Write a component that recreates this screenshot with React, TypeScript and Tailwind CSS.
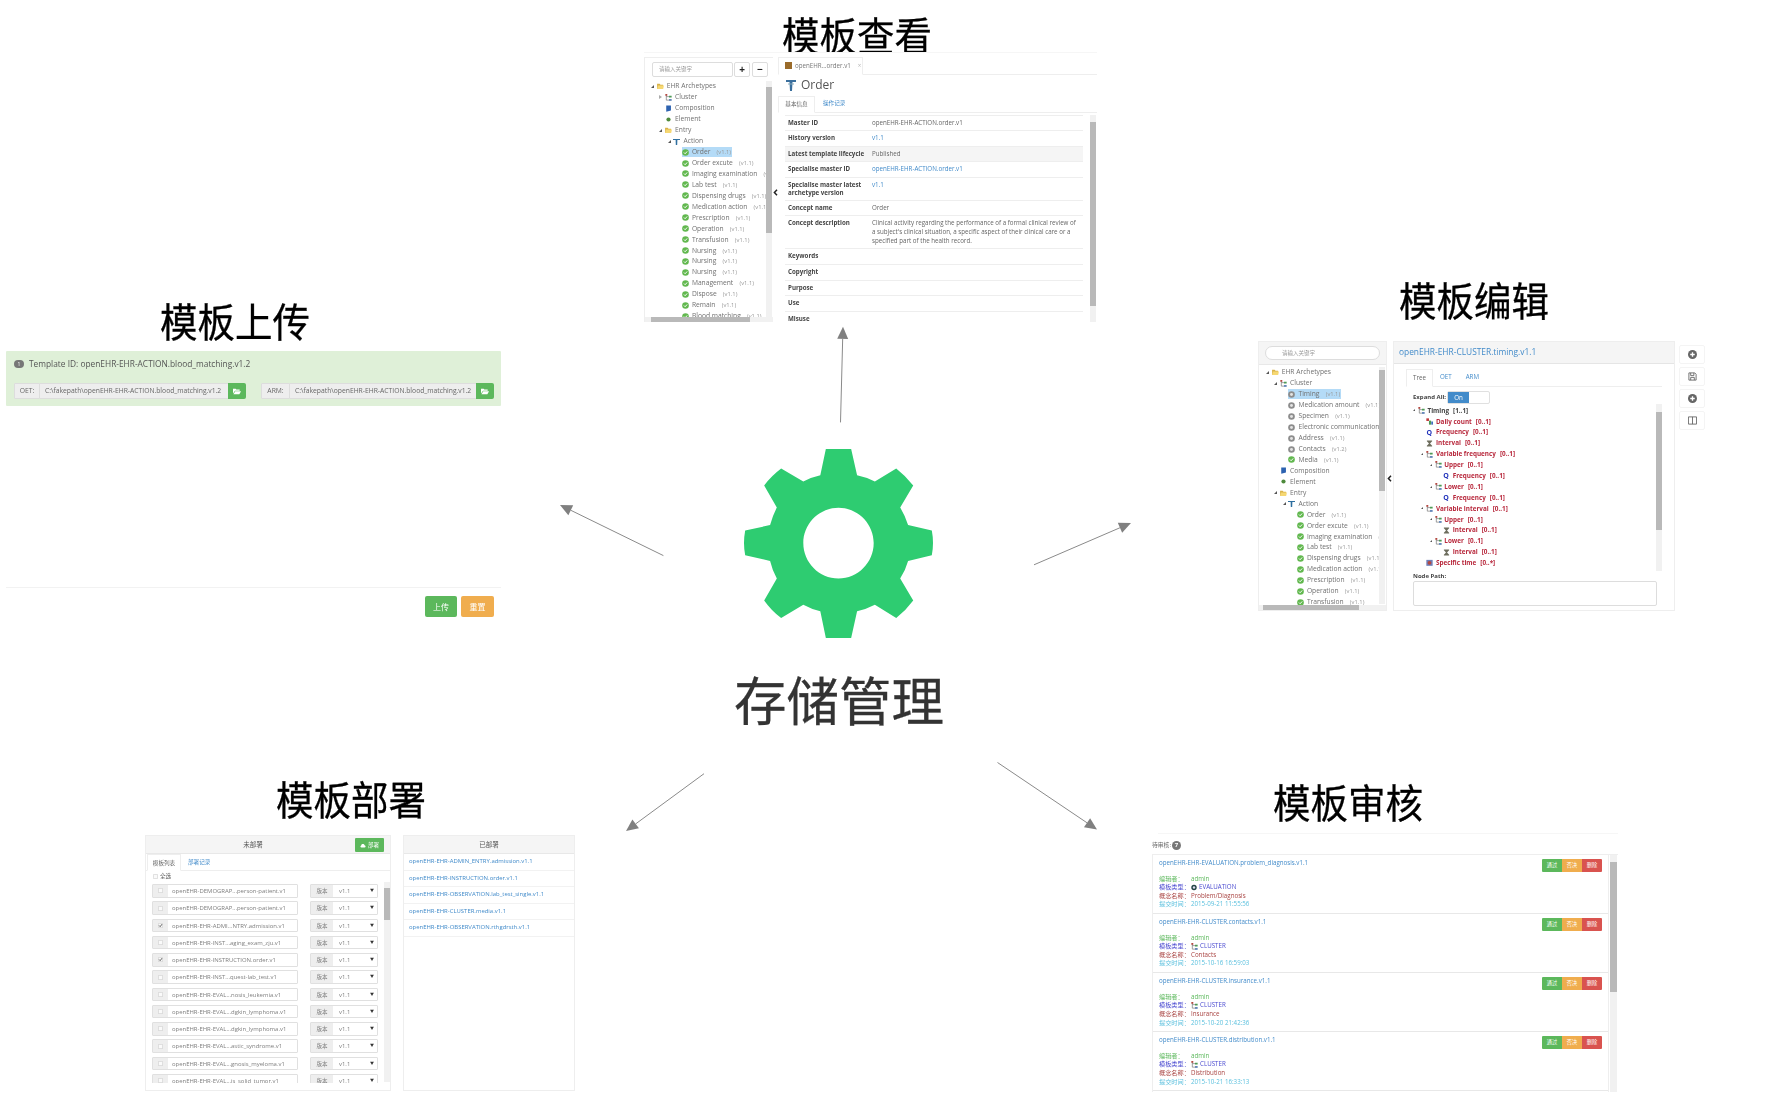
import type { ReactNode } from "react"

const sans = "font-['Open_Sans','Noto_Sans_CJK_SC',sans-serif]"

const Title = ({ className, children }: { className: string; children: ReactNode }) => (
  <div className={`absolute font-['Noto_Sans_CJK_SC',sans-serif] text-[37.5px] leading-[38px] text-black whitespace-nowrap scale-y-105 [-webkit-text-stroke:0.3px_#000] ${className}`}>{children}</div>
)

const Arrow = ({ x1, y1, x2, y2 }: { x1: number; y1: number; x2: number; y2: number }) => {
  const len = Math.hypot(x2 - x1, y2 - y1)
  const ux = (x2 - x1) / len
  const uy = (y2 - y1) / len
  const bx = x2 - ux * 12
  const by = y2 - uy * 12
  return (
    <g>
      <line x1={x1} y1={y1} x2={bx} y2={by} stroke="#8a8a8a" strokeWidth={1} />
      <polygon points={`${x2},${y2} ${bx - uy * 5.5},${by + ux * 5.5} ${bx + uy * 5.5},${by - ux * 5.5}`} fill="#808080" />
    </g>
  )
}

const Gear = () => (
  <svg viewBox="517 382 478 559" preserveAspectRatio="none" className="absolute left-[744px] top-[449px] w-[189px] h-[189px]">
    <path
      fillRule="evenodd"
      fill="#2ecc71"
      d="M724 382H788L803 460Q827 466 848 478L902 440Q926 462 945 490L912 555Q925 580 932 607L992 623Q998 660 992 696L932 713Q925 742 912 765L945 830Q926 860 902 882L848 843Q827 856 803 862L788 941H724L710 862Q687 856 667 843L611 882Q586 860 568 830L600 765Q589 742 583 713L520 696Q514 660 520 623L583 607Q589 580 600 555L568 490Q586 462 611 440L667 478Q687 466 710 460ZM756 556C707 556 667 603 667 660C667 718 707 765 756 765C805 765 845 718 845 660C845 603 805 556 756 556Z"
    />
  </svg>
)

/* small tree icons */
const CheckDot = () => (
  <svg viewBox="0 0 8 8" className="w-[7px] h-[7px] shrink-0">
    <circle cx="4" cy="4" r="3.8" fill="#62b84f" />
    <path d="M2.2 4L3.6 5.4 5.9 2.8" stroke="#fff" strokeWidth="1.1" fill="none" />
  </svg>
)
const GrayDot = () => (
  <svg viewBox="0 0 8 8" className="w-[7px] h-[7px] shrink-0">
    <circle cx="4" cy="4" r="3.8" fill="#8d8d8d" />
    <circle cx="4" cy="4" r="1.7" fill="#e4e4e4" />
  </svg>
)
const Folder = () => (
  <svg viewBox="0 0 8 7" className="w-[7px] h-[6px] shrink-0">
    <path d="M0 1H3L4 2H7V7H0Z" fill="#d9b24a" />
    <path d="M1 3H8L7 7H0Z" fill="#f6d873" />
  </svg>
)
const ClusterIcon = () => (
  <svg viewBox="0 0 8 8" className="w-[7px] h-[7px] shrink-0">
    <path d="M1.5 1V7H5M1.5 3H5" stroke="#777" strokeWidth="0.8" fill="none" />
    <rect x="0.4" y="0" width="2.2" height="2" fill="#b5473f" />
    <rect x="4.6" y="2" width="3" height="2" fill="#4d9a55" />
    <rect x="4.6" y="5.8" width="3" height="2" fill="#5a7fb5" />
  </svg>
)
const ActionIcon = () => (
  <svg viewBox="0 0 8 8" className="w-[7px] h-[7px] shrink-0">
    <path d="M0 1H8V2.4H5L4.8 8H3.2L3 2.4H0Z" fill="#2f6f9f" />
  </svg>
)
const Book = () => (
  <svg viewBox="0 0 8 8" className="w-[7px] h-[7px] shrink-0">
    <path d="M1.4 0.5H6.8V6.4L1.4 7.8Z" fill="#2d62b0" />
  </svg>
)
const Leaf = () => (
  <svg viewBox="0 0 8 8" className="w-[7px] h-[7px] shrink-0">
    <circle cx="4" cy="4" r="2.4" fill="#4e8a3c" />
  </svg>
)
const Hourglass = () => (
  <svg viewBox="0 0 8 8" className="w-[7px] h-[7px] shrink-0">
    <path d="M1 0.5H7V1.4L4.6 4 7 6.6V7.5H1V6.6L3.4 4 1 1.4Z" fill="#6d6d5d" />
  </svg>
)
const QIcon = () => <span className="w-[7px] shrink-0 text-[#2233bb] font-bold text-[7px] leading-[11px]">Q</span>
const Daily = () => (
  <svg viewBox="0 0 8 8" className="w-[7px] h-[7px] shrink-0">
    <rect x="0.4" y="0.4" width="3" height="3" fill="#c03a3a" />
    <rect x="3.4" y="3" width="2.4" height="4.6" fill="#4d9a55" />
    <rect x="6" y="4" width="2" height="3.6" fill="#3f6fc0" />
  </svg>
)
const Calendar = () => (
  <svg viewBox="0 0 8 8" className="w-[7px] h-[7px] shrink-0">
    <rect x="0.4" y="1" width="7.2" height="6.8" fill="#6f7fb8" />
    <circle cx="4" cy="4.4" r="2.2" fill="#b5473f" />
  </svg>
)
const FolderOpen = ({ className }: { className: string }) => (
  <svg viewBox="0 0 12 10" className={className}>
    <path d="M0 1H4L5 2H10V4H3L0 8Z" fill="#fff" />
    <path d="M3.4 4.8H12L9.6 9H0.6Z" fill="#fff" />
  </svg>
)
const Collapse = ({ className }: { className: string }) => (
  <svg viewBox="0 0 5 7" className={`absolute w-[5px] h-[7px] ${className}`}>
    <path d="M4 0.8L1.4 3.5 4 6.2" stroke="#222" strokeWidth="1.5" fill="none" />
  </svg>
)

type Icon = "check" | "gray" | "folder" | "cluster" | "action" | "book" | "leaf"
const icons: Record<Icon, ReactNode> = {
  check: <CheckDot />,
  gray: <GrayDot />,
  folder: <Folder />,
  cluster: <ClusterIcon />,
  action: <ActionIcon />,
  book: <Book />,
  leaf: <Leaf />,
}
const indents = ["pl-0", "pl-[8.4px]", "pl-[16.8px]", "pl-[25.2px]"]

type Node = { d: number; icon: Icon; label: string; ver?: string; caret?: "open" | "closed"; sel?: boolean }

const TreeRow = ({ n }: { n: Node }) => (
  <div className={`flex items-center h-[10.95px] whitespace-nowrap ${indents[n.d]}`}>
    <span className="w-[5.5px] shrink-0 flex items-center">
      {n.caret === "open" && <span className="w-0 h-0 border-l-[3px] border-l-transparent border-b-[3px] border-b-[#555]" />}
      {n.caret === "closed" && <span className="w-0 h-0 border-y-[2.5px] border-y-transparent border-l-[3px] border-l-[#aaa]" />}
    </span>
    <span className={`flex items-center gap-[3.2px] pr-[1px] h-[10px] ${n.sel ? "bg-[#b4dbf7]" : ""}`}>
      {icons[n.icon]}
      <span className="text-[#707070] text-[6.7px] leading-[10px]">{n.label}</span>
      {n.ver && <span className="text-[#9a9a9a] text-[5.8px] leading-[10px] ml-[3px]">({n.ver})</span>}
    </span>
  </div>
)

const VBar = ({ thumb, className }: { thumb: string; className: string }) => (
  <div className={`w-[6px] shrink-0 bg-[#f1f1f1] ${className}`}>
    <div className={`bg-[#b9b9b9] ${thumb}`} />
  </div>
)

const HBar = ({ thumb }: { thumb: string }) => (
  <div className="h-[5px] bg-[#f1f1f1] shrink-0">
    <div className={`h-[5px] bg-[#b9b9b9] ${thumb}`} />
  </div>
)

const viewTree: Node[] = [
  { d: 0, icon: "folder", label: "EHR Archetypes", caret: "open" },
  { d: 1, icon: "cluster", label: "Cluster", caret: "closed" },
  { d: 1, icon: "book", label: "Composition" },
  { d: 1, icon: "leaf", label: "Element" },
  { d: 1, icon: "folder", label: "Entry", caret: "open" },
  { d: 2, icon: "action", label: "Action", caret: "open" },
  { d: 3, icon: "check", label: "Order", ver: "v1.1", sel: true },
  { d: 3, icon: "check", label: "Order excute", ver: "v1.1" },
  { d: 3, icon: "check", label: "Imaging examination", ver: "v1.1" },
  { d: 3, icon: "check", label: "Lab test", ver: "v1.1" },
  { d: 3, icon: "check", label: "Dispensing drugs", ver: "v1.1" },
  { d: 3, icon: "check", label: "Medication action", ver: "v1.1" },
  { d: 3, icon: "check", label: "Prescription", ver: "v1.1" },
  { d: 3, icon: "check", label: "Operation", ver: "v1.1" },
  { d: 3, icon: "check", label: "Transfusion", ver: "v1.1" },
  { d: 3, icon: "check", label: "Nursing", ver: "v1.1" },
  { d: 3, icon: "check", label: "Nursing", ver: "v1.1" },
  { d: 3, icon: "check", label: "Nursing", ver: "v1.1" },
  { d: 3, icon: "check", label: "Management", ver: "v1.1" },
  { d: 3, icon: "check", label: "Dispose", ver: "v1.1" },
  { d: 3, icon: "check", label: "Remain", ver: "v1.1" },
  { d: 3, icon: "check", label: "Blood matching", ver: "v1.1" },
]

const editTree: Node[] = [
  { d: 0, icon: "folder", label: "EHR Archetypes", caret: "open" },
  { d: 1, icon: "cluster", label: "Cluster", caret: "open" },
  { d: 2, icon: "gray", label: "Timing", ver: "v1.1", sel: true },
  { d: 2, icon: "gray", label: "Medication amount", ver: "v1.1" },
  { d: 2, icon: "gray", label: "Specimen", ver: "v1.1" },
  { d: 2, icon: "gray", label: "Electronic communication", ver: "v1.1" },
  { d: 2, icon: "gray", label: "Address", ver: "v1.1" },
  { d: 2, icon: "gray", label: "Contacts", ver: "v1.2" },
  { d: 2, icon: "check", label: "Media", ver: "v1.1" },
  { d: 1, icon: "book", label: "Composition" },
  { d: 1, icon: "leaf", label: "Element" },
  { d: 1, icon: "folder", label: "Entry", caret: "open" },
  { d: 2, icon: "action", label: "Action", caret: "open" },
  { d: 3, icon: "check", label: "Order", ver: "v1.1" },
  { d: 3, icon: "check", label: "Order excute", ver: "v1.1" },
  { d: 3, icon: "check", label: "Imaging examination", ver: "v1.1" },
  { d: 3, icon: "check", label: "Lab test", ver: "v1.1" },
  { d: 3, icon: "check", label: "Dispensing drugs", ver: "v1.1" },
  { d: 3, icon: "check", label: "Medication action", ver: "v1.1" },
  { d: 3, icon: "check", label: "Prescription", ver: "v1.1" },
  { d: 3, icon: "check", label: "Operation", ver: "v1.1" },
  { d: 3, icon: "check", label: "Transfusion", ver: "v1.1" },
]

const metaRows: { k: string; v?: string; link?: boolean; h?: string; hl?: boolean }[] = [
  { k: "Master ID", v: "openEHR-EHR-ACTION.order.v1" },
  { k: "History version", v: "v1.1", link: true },
  { k: "Latest template lifecycle", v: "Published", hl: true },
  { k: "Specialise master ID", v: "openEHR-EHR-ACTION.order.v1", link: true },
  { k: "Specialise master latest archetype version", v: "v1.1", link: true, h: "h-[23px]" },
  { k: "Concept name", v: "Order" },
  {
    k: "Concept description",
    v: "Clinical activity regarding the performance of a formal clinical review of a subject's clinical situation, a specific aspect of their clinical care or a specified part of the health record.",
    h: "h-[33px]",
  },
  { k: "Keywords" },
  { k: "Copyright" },
  { k: "Purpose" },
  { k: "Use" },
  { k: "Misuse" },
]

const ViewPanels = () => (
  <>
    <div className="absolute left-[644px] top-[52px] w-[453px] h-px bg-[#f6f6f6]" />
    <div className={`absolute left-[644px] top-[57px] w-[129px] h-[265px] flex flex-col border-l border-t border-[#eeeeee] bg-white overflow-hidden blur-[0.35px] ${sans}`}>
      <div className="flex gap-[1px] pl-[7px] pt-[4px] h-[23px] shrink-0">
        <div className="w-[81px] h-[15px] border border-[#ddd] rounded-[2px] pl-[6px] text-[5.5px] leading-[13px] text-[#999]">请输入关键字</div>
        <div className="w-[16px] h-[15px] border border-[#ddd] rounded-[2px] flex items-center justify-center text-[10px] font-bold text-[#222]">+</div>
        <div className="ml-[1px] w-[16px] h-[15px] border border-[#ddd] rounded-[2px] flex items-center justify-center text-[10px] font-bold text-[#222]">−</div>
      </div>
      <div className="flex flex-1 min-h-0">
        <div className="w-[121px] pl-[6px] overflow-hidden">
          {viewTree.map((n, i) => (
            <TreeRow key={i} n={n} />
          ))}
        </div>
        <VBar className="h-[236px]" thumb="mt-[6px] h-[146px]" />
      </div>
      <HBar thumb="ml-[6px] w-[99px]" />
    </div>
    <Collapse className="left-[773px] top-[189px]" />
    <div className={`absolute left-[778px] top-[57px] w-[319px] h-[265px] flex flex-col bg-white overflow-hidden blur-[0.35px] ${sans}`}>
      <div className="h-[17.5px] shrink-0 border-b border-[#eee]">
        <div className="w-[85px] h-[17.5px] border border-b-white border-[#eee] bg-white flex items-center gap-[3px] pl-[6px] text-[6.2px] text-[#777]">
          <span className="w-[7px] h-[7px] bg-[#9a6b2a]" />
          openEHR...order.v1
          <span className="ml-[4px] text-[#bbb]">×</span>
        </div>
      </div>
      <div className="h-[21px] shrink-0 flex items-center gap-[5px] pl-[8px] text-[#555] text-[12px]">
        <svg viewBox="0 0 10 12" className="w-[10px] h-[12px]">
          <path d="M0 1H10V3H6.5L6 12H4L3.5 3H0Z" fill="#3a6f9d" />
          <path d="M2 4.5H8V5.5H2Z" fill="#8ab" />
        </svg>
        Order
      </div>
      <div className="h-[17px] shrink-0 border-b border-[#eee] flex">
        <div className="w-[37px] h-[17px] border border-b-white border-[#eee] bg-white flex items-center justify-center text-[5.6px] text-[#666]">基本信息</div>
        <div className="pl-[8px] flex items-center text-[5.6px] text-[#428bca]">操作记录</div>
      </div>
      <div className="flex flex-1 min-h-0 pt-[2px]">
        <div className="w-[298px] ml-[7px] border-t border-[#eee] overflow-hidden">
          {metaRows.map((r) => (
            <div key={r.k} className={`flex border-b border-[#eee] pt-[3px] text-[6.2px] leading-[8.6px] ${r.h ?? "h-[15.6px]"} ${r.hl ? "bg-[#f5f5f5]" : ""}`}>
              <div className="w-[87px] pl-[3px] pr-[2px] font-bold text-[#444] shrink-0">{r.k}</div>
              <div className={`w-[207px] ${r.link ? "text-[#428bca]" : "text-[#666]"}`}>{r.v}</div>
            </div>
          ))}
        </div>
        <VBar className="ml-[7px] h-[207px]" thumb="mt-[7px] h-[184px]" />
      </div>
    </div>
  </>
)

const modelTree: { d: number; icon: ReactNode; label: string; range: string; caret?: boolean; root?: boolean }[] = [
  { d: 0, icon: <ClusterIcon />, label: "Timing", range: "[1..1]", caret: true, root: true },
  { d: 1, icon: <Daily />, label: "Daily count", range: "[0..1]" },
  { d: 1, icon: <QIcon />, label: "Frequency", range: "[0..1]" },
  { d: 1, icon: <Hourglass />, label: "Interval", range: "[0..1]" },
  { d: 1, icon: <ClusterIcon />, label: "Variable frequency", range: "[0..1]", caret: true },
  { d: 2, icon: <ClusterIcon />, label: "Upper", range: "[0..1]", caret: true },
  { d: 3, icon: <QIcon />, label: "Frequency", range: "[0..1]" },
  { d: 2, icon: <ClusterIcon />, label: "Lower", range: "[0..1]", caret: true },
  { d: 3, icon: <QIcon />, label: "Frequency", range: "[0..1]" },
  { d: 1, icon: <ClusterIcon />, label: "Variable interval", range: "[0..1]", caret: true },
  { d: 2, icon: <ClusterIcon />, label: "Upper", range: "[0..1]", caret: true },
  { d: 3, icon: <Hourglass />, label: "Interval", range: "[0..1]" },
  { d: 2, icon: <ClusterIcon />, label: "Lower", range: "[0..1]", caret: true },
  { d: 3, icon: <Hourglass />, label: "Interval", range: "[0..1]" },
  { d: 1, icon: <Calendar />, label: "Specific time", range: "[0..*]" },
  { d: 1, icon: <QIcon />, label: "Day of week", range: "[0..*]" },
]

const EditPanels = () => (
  <>
    <div className={`absolute left-[1258px] top-[341px] w-[129px] h-[270px] flex flex-col border border-[#eee] bg-white overflow-hidden blur-[0.35px] ${sans}`}>
      <div className="h-[23px] shrink-0 bg-[#f5f5f5] border-b border-[#e8e8e8] pt-[4px] pl-[6px]">
        <div className="w-[115px] h-[14px] rounded-full border border-[#ddd] bg-white pl-[16px] text-[5.5px] leading-[12px] text-[#999]">请输入关键字</div>
      </div>
      <div className="flex flex-1 min-h-0 pt-[2px]">
        <div className="w-[120px] pl-[7px] overflow-hidden">
          {editTree.map((n, i) => (
            <TreeRow key={i} n={n} />
          ))}
        </div>
        <VBar className="h-[237px]" thumb="mt-[3px] h-[121px]" />
      </div>
      <HBar thumb="ml-[4px] w-[96px]" />
    </div>
    <Collapse className="left-[1387px] top-[475px]" />
    <div className={`absolute left-[1393px] top-[341px] w-[282px] h-[270px] flex flex-col border border-[#eee] bg-white overflow-hidden blur-[0.35px] ${sans}`}>
      <div className="h-[22px] shrink-0 bg-[#f5f5f5] border-b border-[#e5e5e5] pl-[5px] text-[8.4px] leading-[20px] text-[#428bca]">openEHR-EHR-CLUSTER.timing.v1.1</div>
      <div className="flex flex-col pl-[12px] pr-[12px] pt-[5px]">
        <div className="flex h-[18px] border-b border-[#eee] text-[6.2px] leading-[16px]">
          <div className="w-[27px] h-[18px] border border-b-white border-[#eee] bg-white text-center text-[#666]">Tree</div>
          <div className="pl-[7px] text-[#428bca]">OET</div>
          <div className="pl-[14px] text-[#428bca]">ARM</div>
        </div>
        <div className="flex items-center h-[14px] mt-[3px] pl-[7px]">
          <span className="w-[34px] text-[6px] font-bold text-[#444]">Expand All:</span>
          <div className="flex w-[43px] h-[13px] border border-[#e0e0e0] rounded-[2px]">
            <div className="w-[21px] bg-[#428bca] text-white text-[6.2px] leading-[11px] text-center">On</div>
          </div>
        </div>
        <div className="flex h-[167px] pl-[7px]">
          <div className="flex-1 pt-[1px] overflow-hidden">
            {modelTree.map((r, i) => (
              <div key={i} className={`flex items-center h-[10.9px] whitespace-nowrap ${indents[r.d]}`}>
                <span className="w-[5px] shrink-0 flex items-center">
                  {r.caret && <span className="w-0 h-0 border-l-[2.5px] border-l-transparent border-b-[2.5px] border-b-[#555]" />}
                </span>
                {r.icon}
                <span className={`ml-[2.5px] font-bold text-[6.35px] ${r.root ? "text-[#444]" : "text-[#b8283c]"}`}>{r.label}</span>
                <span className={`ml-[4px] font-bold text-[6.35px] ${r.root ? "text-[#444]" : "text-[#b8283c]"}`}>{r.range}</span>
              </div>
            ))}
          </div>
          <VBar className="h-[167px]" thumb="mt-[8px] h-[118px]" />
        </div>
        <div className="pl-[7px] h-[10px] text-[6px] font-bold text-[#444] leading-[10px]">Node Path:</div>
        <div className="ml-[7px] w-[244px] h-[25px] border border-[#ddd] rounded-[2px]" />
      </div>
    </div>
    <div className="absolute left-[1679px] top-[345px] w-[26px] flex flex-col gap-[3px] blur-[0.2px]">
      {[
        <svg key="a" viewBox="0 0 10 10" className="w-[9px] h-[9px]"><circle cx="5" cy="5" r="5" fill="#666" /><path d="M5 2.5V7.5M2.5 5H7.5" stroke="#fff" strokeWidth="1.5" /></svg>,
        <svg key="b" viewBox="0 0 10 10" className="w-[9px] h-[9px]"><path d="M1 1H7.5L9 2.5V9H1ZM3 1V4H6.5V1M3 9V6H7V9" stroke="#666" fill="none" /></svg>,
        <svg key="c" viewBox="0 0 10 10" className="w-[9px] h-[9px]"><circle cx="5" cy="5" r="5" fill="#666" /><path d="M5 2.5V7.5M2.5 5H7.5" stroke="#fff" strokeWidth="1.5" /></svg>,
        <svg key="d" viewBox="0 0 10 10" className="w-[9px] h-[9px]"><path d="M0.5 1H9.5V9H0.5ZM5 1V9" stroke="#666" fill="none" /></svg>,
      ].map((ic, i) => (
        <div key={i} className="h-[19px] border border-[#f4f4f4] rounded-[2px] flex items-center justify-center">{ic}</div>
      ))}
    </div>
  </>
)

const FileGroup = ({ label, path, labelW, pathW }: { label: string; path: string; labelW: string; pathW: string }) => (
  <div className="flex h-[16px] text-[6.75px] leading-[14px] text-[#666]">
    <div className={`${labelW} border border-[#ddd] bg-[#eee] text-center rounded-l-[1px]`}>{label}</div>
    <div className={`${pathW} border-y border-[#ddd] bg-[#eee] pl-[5px] pr-[4px] overflow-hidden whitespace-nowrap`}>{path}</div>
    <div className="w-[18px] bg-[#5cb85c] rounded-r-[2px] flex items-center justify-center">
      <FolderOpen className="w-[8px] h-[7px]" />
    </div>
  </div>
)

const UploadPanel = () => (
  <>
    <div className={`absolute left-[6px] top-[351px] w-[495px] h-[55px] bg-[#dff0d8] rounded-[1px] flex flex-col pt-[8px] px-[8px] blur-[0.35px] ${sans}`}>
      <div className="flex items-center gap-[5px] h-[10px]">
        <span className="w-[10px] h-[8px] rounded-full bg-[#777] text-white text-[5px] leading-[8px] text-center">1</span>
        <span className="text-[8.35px] text-[#555] whitespace-nowrap">Template ID: openEHR-EHR-ACTION.blood_matching.v1.2</span>
      </div>
      <div className="flex gap-[15px] mt-[14px]">
        <FileGroup label="OET:" labelW="w-[26px]" pathW="w-[188px]" path="C:\fakepath\openEHR-EHR-ACTION.blood_matching.v1.2" />
        <FileGroup label="ARM:" labelW="w-[29px]" pathW="w-[186px]" path="C:\fakepath\openEHR-EHR-ACTION.blood_matching.v1.2" />
      </div>
    </div>
    <div className={`absolute left-[6px] top-[587px] w-[495px] flex justify-end gap-[4px] pr-[7px] pt-[8px] border-t border-[#f2f2f2] blur-[0.35px] ${sans}`}>
      <div className="w-[32px] h-[21px] rounded-[2px] bg-[#5cb85c] text-white text-[8px] leading-[21px] text-center">上传</div>
      <div className="w-[33px] h-[21px] rounded-[2px] bg-[#f0ad4e] text-white text-[8px] leading-[21px] text-center">重置</div>
    </div>
  </>
)

const undeployed: { name: string; on?: boolean }[] = [
  { name: "openEHR-DEMOGRAP...person-patient.v1" },
  { name: "openEHR-DEMOGRAP...person-patient.v1" },
  { name: "openEHR-EHR-ADMI...NTRY.admission.v1", on: true },
  { name: "openEHR-EHR-INST...aging_exam_zju.v1" },
  { name: "openEHR-EHR-INSTRUCTION.order.v1", on: true },
  { name: "openEHR-EHR-INST...quest-lab_test.v1" },
  { name: "openEHR-EHR-EVAL...nosis_leukemia.v1" },
  { name: "openEHR-EHR-EVAL...dgkin_lymphoma.v1" },
  { name: "openEHR-EHR-EVAL...dgkin_lymphoma.v1" },
  { name: "openEHR-EHR-EVAL...astic_syndrome.v1" },
  { name: "openEHR-EHR-EVAL...gnosis_myeloma.v1" },
  { name: "openEHR-EHR-EVAL...is_solid_tumor.v1" },
]

const deployed = [
  "openEHR-EHR-ADMIN_ENTRY.admission.v1.1",
  "openEHR-EHR-INSTRUCTION.order.v1.1",
  "openEHR-EHR-OBSERVATION.lab_test_single.v1.1",
  "openEHR-EHR-CLUSTER.media.v1.1",
  "openEHR-EHR-OBSERVATION.rthgdrsth.v1.1",
]

const Box = ({ on }: { on?: boolean }) => (
  <svg viewBox="0 0 6 6" className="block w-[5px] h-[5px]">
    <rect x="0.4" y="0.4" width="5.2" height="5.2" rx="1" fill="#fafafa" stroke="#c4c4c4" strokeWidth="0.7" />
    {on && <path d="M1.4 3L2.6 4.4 4.8 1.4" stroke="#444" strokeWidth="1" fill="none" />}
  </svg>
)

const DeployPanels = () => (
  <>
    <div className={`absolute left-[145px] top-[835px] w-[246px] h-[256px] flex flex-col border border-[#eee] bg-white overflow-hidden blur-[0.35px] ${sans}`}>
      <div className="relative h-[18px] shrink-0 bg-[#f5f5f5] border-b border-[#e8e8e8] pr-[30px] text-center text-[6.5px] leading-[18px] text-[#555]">
        未部署
        <div className="absolute right-[6px] top-[2px] w-[29px] h-[14px] rounded-[1px] bg-[#5cb85c] text-white text-[5.5px] leading-[14px] flex items-center justify-center gap-[2px]">
          <svg viewBox="0 0 10 8" className="w-[6px] h-[5px]">
            <path d="M2.5 7.5C0.5 7.5 0 4.5 2 4 2.4 1 7 0.8 7.6 3.6 10 3.8 10 7.5 7.5 7.5Z" fill="#fff" />
          </svg>
          部署
        </div>
      </div>
      <div className="h-[17px] shrink-0 border-b border-[#eee] flex text-[5.6px] leading-[16px]">
        <div className="ml-[1px] w-[34px] h-[17px] border border-b-white border-[#eee] bg-white text-center text-[#666]">模板列表</div>
        <div className="pl-[7px] text-[#428bca]">部署记录</div>
      </div>
      <div className="flex items-center gap-[2px] pl-[7px] h-[11px] text-[5.6px] text-[#555] shrink-0">
        <Box />
        全选
      </div>
      <div className="flex flex-1 min-h-0">
        <div className="w-[238px] h-[201px] overflow-hidden pt-[2px] pl-[6px] flex flex-col gap-[3.75px]">
          {undeployed.map((r, i) => (
            <div key={i} className="flex shrink-0 gap-[12px] h-[13.5px] text-[5.95px] leading-[12px] text-[#808080]">
              <div className="flex w-[146px] border border-[#e0e0e0] rounded-[1px] whitespace-nowrap overflow-hidden">
                <div className="w-[15px] bg-[#eee] flex items-center justify-center shrink-0">
                  <Box on={r.on} />
                </div>
                <div className="pl-[4px]">{r.name}</div>
              </div>
              <div className="flex w-[68px] border border-[#e0e0e0] rounded-[1px]">
                <div className="w-[22px] bg-[#eee] text-center text-[5.5px]">版本</div>
                <div className="flex-1 pl-[6px]">v1.1</div>
                <div className="pr-[3px] text-[4px] text-[#333]">▼</div>
              </div>
            </div>
          ))}
        </div>
        <VBar className="h-[200px]" thumb="mt-[6px] h-[32px]" />
      </div>
    </div>
    <div className={`absolute left-[403px] top-[835px] w-[172px] h-[256px] flex flex-col border border-[#eee] bg-white overflow-hidden blur-[0.35px] ${sans}`}>
      <div className="h-[18px] shrink-0 bg-[#f5f5f5] border-b border-[#e8e8e8] text-center text-[6.5px] leading-[18px] text-[#555]">已部署</div>
      {deployed.map((d) => (
        <div key={d} className="h-[16.5px] shrink-0 border-b border-[#f2f2f2] pl-[5px] text-[5.95px] leading-[15px] text-[#428bca] whitespace-nowrap">{d}</div>
      ))}
    </div>
  </>
)

const reviews: { title: string; typeIcon: ReactNode; type: string; concept: string; time: string }[] = [
  {
    title: "openEHR-EHR-EVALUATION.problem_diagnosis.v1.1",
    typeIcon: (
      <svg viewBox="0 0 8 8" className="w-[6px] h-[7px]">
        <circle cx="4" cy="4" r="3.6" fill="#244" />
        <circle cx="4" cy="4" r="1.6" fill="#dde" />
      </svg>
    ),
    type: "EVALUATION",
    concept: "Problem/Diagnosis",
    time: "2015-09-21 11:55:56",
  },
  { title: "openEHR-EHR-CLUSTER.contacts.v1.1", typeIcon: <ClusterIcon />, type: "CLUSTER", concept: "Contacts", time: "2015-10-16 16:59:03" },
  { title: "openEHR-EHR-CLUSTER.insurance.v1.1", typeIcon: <ClusterIcon />, type: "CLUSTER", concept: "Insurance", time: "2015-10-20 21:42:36" },
  { title: "openEHR-EHR-CLUSTER.distribution.v1.1", typeIcon: <ClusterIcon />, type: "CLUSTER", concept: "Distribution", time: "2015-10-21 16:33:13" },
]

const ReviewPanel = () => (
  <>
    <div className="absolute left-[1158px] top-[833px] w-[460px] h-px bg-[#f6f6f6]" />
    <div className={`absolute left-[1152px] top-[841px] flex items-center gap-[1px] text-[5.8px] text-[#666] blur-[0.35px] ${sans}`}>
      待审核:
      <span className="w-[9px] h-[9px] rounded-full bg-[#777] text-white text-[6px] leading-[9px] text-center font-bold">7</span>
    </div>
    <div className={`absolute left-[1152px] top-[854px] w-[466px] h-[238px] flex border-t border-[#eee] overflow-hidden blur-[0.35px] ${sans}`}>
      <div className="w-[457px] shrink-0 border-x border-[#eee]">
        {reviews.map((r) => (
          <div key={r.title} className="relative h-[59.1px] border-b border-[#e8e8e8] pl-[6px] pt-[4px] text-[6.2px] leading-[8.6px]">
            <div className="h-[8.6px] text-[#428bca]">{r.title}</div>
            <div className="mt-[7px] flex text-[#5cb85c]"><span className="w-[32px]">编辑者：</span>admin</div>
            <div className="flex items-center text-[#4a4ad0]"><span className="w-[32px]">模板类型：</span><span className="mr-[2px]">{r.typeIcon}</span>{r.type}</div>
            <div className="flex text-[#a94442]"><span className="w-[32px]">概念名称：</span>{r.concept}</div>
            <div className="flex text-[#5bc0de]"><span className="w-[32px]">提交时间：</span>{r.time}</div>
            <div className="absolute right-[6px] top-[4px] flex h-[13px] text-white text-[5.2px] leading-[13px] text-center">
              <div className="w-[20px] rounded-l-[1px] bg-[#5cb85c]">通过</div>
              <div className="w-[20px] bg-[#f0ad4e]">否决</div>
              <div className="w-[20px] rounded-r-[1px] bg-[#d9534f]">删除</div>
            </div>
          </div>
        ))}
      </div>
      <VBar className="ml-[1px] h-[238px] w-[7px]" thumb="mt-[7px] h-[130px]" />
    </div>
  </>
)

export default function App() {
  return (
    <div className="relative w-[1767px] h-[1108px] bg-white overflow-hidden">
      <Title className="left-[782px] top-[15px] h-[36px] overflow-hidden">模板查看</Title>
      <Title className="left-[1399px] top-[280px]">模板编辑</Title>
      <Title className="left-[160px] top-[301px]">模板上传</Title>
      <Title className="left-[276px] top-[779px]">模板部署</Title>
      <Title className="left-[1273px] top-[782px]">模板审核</Title>

      <ViewPanels />
      <EditPanels />
      <UploadPanel />
      <DeployPanels />
      <ReviewPanel />

      <svg className="absolute left-0 top-0 w-[1767px] h-[1108px] pointer-events-none" viewBox="0 0 1767 1108">
        <Arrow x1={840.5} y1={422.4} x2={843} y2={326.8} />
        <Arrow x1={663.4} y1={555.6} x2={560} y2={505} />
        <Arrow x1={1034} y1={564.8} x2={1131} y2={523} />
        <Arrow x1={704} y1={773.7} x2={626} y2={831} />
        <Arrow x1={997.5} y1={762.5} x2={1097} y2={829.5} />
      </svg>

      <Gear />
      <div className="absolute left-[734px] top-[666px] font-['Noto_Sans_CJK_SC',sans-serif] text-[52.5px] leading-[64px] text-[#333] whitespace-nowrap [-webkit-text-stroke:0.3px_#333]">存储管理</div>
    </div>
  )
}
